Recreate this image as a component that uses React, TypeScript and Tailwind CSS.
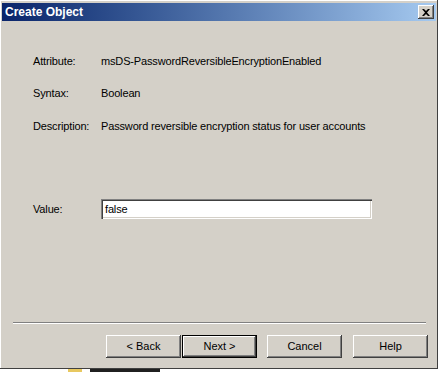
const raised =
  'shadow-[inset_-1px_-1px_#404040,inset_1px_1px_#ffffff,inset_-2px_-2px_#808080,inset_2px_2px_#d4d0c8]'

function Field({ label, value, className }: { label: string; value: string; className?: string }) {
  return (
    <div className={`flex h-[13px] items-center leading-[13px] ${className ?? ''}`}>
      <span className="w-[68px] shrink-0">{label}</span>
      <span>{value}</span>
    </div>
  )
}

function Button({ children, isDefault }: { children: string; isDefault?: boolean }) {
  return (
    <button
      className={`flex h-[23px] w-[75px] items-center justify-center bg-[#d4d0c8] text-[11px] text-black ${
        isDefault ? 'border border-black ' : ''
      }${raised}`}
    >
      {children}
    </button>
  )
}

export default function App() {
  return (
    <div className="h-[372px] w-[438px] overflow-hidden bg-white font-['Liberation_Sans',Tahoma,sans-serif] text-[11px] text-black">
      <div className="flex h-[369px] flex-col border-b border-b-[#404040] border-r border-r-[#404040] bg-[#d4d0c8] pl-[2px] pr-[1px] pt-[3px] shadow-[inset_1px_1px_#ffffff]">
        {/* title bar */}
        <div className="flex h-[18px] items-center justify-between bg-gradient-to-r from-[#0a246a] to-[#a6caf0] pl-[3px] pr-[2px]">
          <span className="text-[12px] font-bold leading-none text-white">Create Object</span>
          <div className={`flex h-[14px] w-[16px] items-center justify-center bg-[#d4d0c8] ${raised}`}>
            <svg width="8" height="7" viewBox="0 0 8 7">
              <path d="M0 0h2l2 2 2-2h2L5 3.5 8 7H6L4 5 2 7H0l3-3.5z" fill="#000" />
            </svg>
          </div>
        </div>

        {/* body */}
        <div className="flex flex-1 flex-col pl-[31px] tracking-[-0.15px]">
          <Field label="Attribute:" value="msDS-PasswordReversibleEncryptionEnabled" className="mt-[34px]" />
          <Field label="Syntax:" value="Boolean" className="mt-[19px]" />
          <Field label="Description:" value="Password reversible encryption status for user accounts" className="mt-[20px]" />

          <div className="mt-[66px] flex items-center">
            <span className="w-[68px] shrink-0">Value:</span>
            <div className="flex h-[20px] w-[271px] items-center bg-white pl-[4px] shadow-[inset_1px_1px_#808080,inset_2px_2px_#404040,inset_-1px_-1px_#ffffff,inset_-2px_-2px_#d4d0c8]">
              false
            </div>
          </div>
        </div>

        {/* separator */}
        <div className="ml-[11px] mr-[10px] h-[2px] border-b border-b-white border-t border-t-[#808080]" />

        {/* buttons */}
        <div className="mb-[10px] mt-[11px] flex pl-[104px]">
          <Button>&lt; Back</Button>
          <div className="ml-px">
            <Button isDefault>Next &gt;</Button>
          </div>
          <div className="ml-[10px]">
            <Button>Cancel</Button>
          </div>
          <div className="ml-[11px]">
            <Button>Help</Button>
          </div>
        </div>
      </div>
      <div className="flex h-[3px] items-center gap-2 pl-[68px]">
        <div className="h-[3px] w-[14px] bg-[#e8c860]" />
        <div className="h-[3px] w-[70px] bg-[#202020]" />
      </div>
    </div>
  )
}
